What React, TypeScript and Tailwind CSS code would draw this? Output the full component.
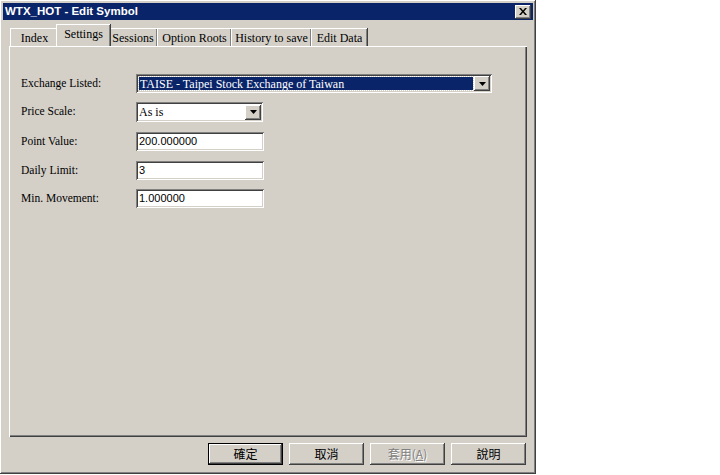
import type { ReactNode } from "react";

const raised =
  "shadow-[inset_-1px_-1px_#404040,inset_1px_1px_#ffffff,inset_-2px_-2px_#808080,inset_2px_2px_#d4d0c8]";
const sunken =
  "shadow-[inset_1px_1px_#808080,inset_-1px_-1px_#ffffff,inset_2px_2px_#404040,inset_-2px_-2px_#d4d0c8]";

function DropArrow() {
  return (
    <div className={`flex h-[15px] w-[16px] shrink-0 items-center justify-center bg-[#d4d0c8] ${raised}`}>
      <svg width="7" height="4" viewBox="0 0 7 4">
        <path d="M0 0h7L3.5 4z" fill="#000" />
      </svg>
    </div>
  );
}

function Field({ value, width }: { value: string; width: string }) {
  return (
    <div className={`flex h-[19px] items-center bg-white pl-[3px] ${width} ${sunken}`}>
      <span className="font-['Liberation_Sans',sans-serif] text-[11px] leading-none text-black">{value}</span>
    </div>
  );
}

function Row({ label, children, className }: { label: string; children: ReactNode; className: string }) {
  return (
    <div className={`flex items-center ${className}`}>
      <div className="w-[115px] text-[11.5px] leading-none text-black">{label}</div>
      {children}
    </div>
  );
}

function Tab({ label, width, active }: { label: string; width: string; active?: boolean }) {
  if (active) {
    return (
      <div
        className={`relative z-10 -mx-[2px] flex h-[22px] items-start justify-center border-l border-t border-white bg-[#d4d0c8] pt-[2px] shadow-[inset_-1px_0_#808080,1px_0_#404040] ${width}`}
      >
        <span className="text-[12px] leading-[15px]">{label}</span>
      </div>
    );
  }
  return (
    <div
      className={`flex h-[18px] items-center justify-center border-l border-t border-white shadow-[inset_-1px_0_#808080,1px_0_#404040] ${width}`}
    >
      <span className="text-[12px] leading-none">{label}</span>
    </div>
  );
}

function Btn({ children, def, disabled }: { children: ReactNode; def?: boolean; disabled?: boolean }) {
  return (
    <div
      className={`flex h-[22px] w-[75px] items-center justify-center bg-[#d4d0c8] font-['Noto_Sans_CJK_TC',sans-serif] text-[12px] ${
        def
          ? "shadow-[inset_0_0_0_1px_#000,inset_-2px_-2px_#404040,inset_2px_2px_#ffffff,inset_-3px_-3px_#808080]"
          : raised
      } ${disabled ? "text-[#808080] [text-shadow:1px_1px_#ffffff]" : "text-black"}`}
    >
      {children}
    </div>
  );
}

export default function App() {
  return (
    <div className="flex h-[475px] w-[720px] items-start bg-white font-['Liberation_Serif',serif] text-black">
      <div className={`flex h-[474px] w-[536px] flex-col bg-[#d4d0c8] p-[3px] ${raised}`}>
        {/* title bar */}
        <div className="flex h-[17px] items-center justify-between bg-[#0a246a] pl-[2px] pr-[2px]">
          <span className="font-['Liberation_Sans',sans-serif] text-[11.5px] font-bold leading-none text-white">
            WTX_HOT - Edit Symbol
          </span>
          <div className={`flex h-[14px] w-[16px] items-center justify-center bg-[#d4d0c8] ${raised}`}>
            <svg width="8" height="7" viewBox="0 0 8 7">
              <path d="M0 0h2l2 2.5L6 0h2L5 3.5 8 7H6L4 4.5 2 7H0l3-3.5z" fill="#000" />
            </svg>
          </div>
        </div>

        {/* tabs */}
        <div className="ml-[7px] mt-[5px] flex h-[21px] items-end">
          <Tab label="Index" width="w-[48px]" />
          <Tab label="Settings" width="w-[54px]" active />
          <Tab label="Sessions" width="w-[49px]" />
          <Tab label="Option Roots" width="w-[74px]" />
          <Tab label="History to save" width="w-[80px]" />
          <Tab label="Edit Data" width="w-[56px]" />
        </div>

        {/* panel */}
        <div className="ml-[6px] h-[391px] w-[518px] border-l border-t border-white pl-[11px] pt-[27px] shadow-[inset_-1px_-1px_#404040,inset_-2px_-2px_#808080]">
          <Row label="Exchange Listed:" className="h-[19px]">
            <div className={`flex h-[19px] w-[356px] items-center bg-white pl-[3px] pr-[2px] ${sunken}`}>
              <div className="mr-[1px] flex h-[13px] flex-1 items-center bg-[#0a246a] pl-[1px] outline outline-1 outline-dotted outline-[#d4d0c8]">
                <span className="text-[12px] leading-none text-white">TAISE - Taipei Stock Exchange of Taiwan</span>
              </div>
              <DropArrow />
            </div>
          </Row>
          <Row label="Price Scale:" className="mt-[9px] h-[20px]">
            <div className={`flex h-[20px] w-[127px] items-center bg-white pl-[3px] pr-[2px] ${sunken}`}>
              <span className="flex-1 text-[12px] leading-none">As is</span>
              <DropArrow />
            </div>
          </Row>
          <Row label="Point Value:" className="mt-[10px] h-[19px]">
            <Field value="200.000000" width="w-[128px]" />
          </Row>
          <Row label="Daily Limit:" className="mt-[10px] h-[19px]">
            <Field value="3" width="w-[128px]" />
          </Row>
          <Row label="Min. Movement:" className="mt-[9px] h-[19px]">
            <Field value="1.000000" width="w-[128px]" />
          </Row>
        </div>

        {/* buttons */}
        <div className="mr-[7px] mt-[6px] flex justify-end gap-[6px]">
          <Btn def>確定</Btn>
          <Btn>取消</Btn>
          <Btn disabled>
            套用(<span className="underline">A</span>)
          </Btn>
          <Btn>說明</Btn>
        </div>
      </div>
    </div>
  );
}
